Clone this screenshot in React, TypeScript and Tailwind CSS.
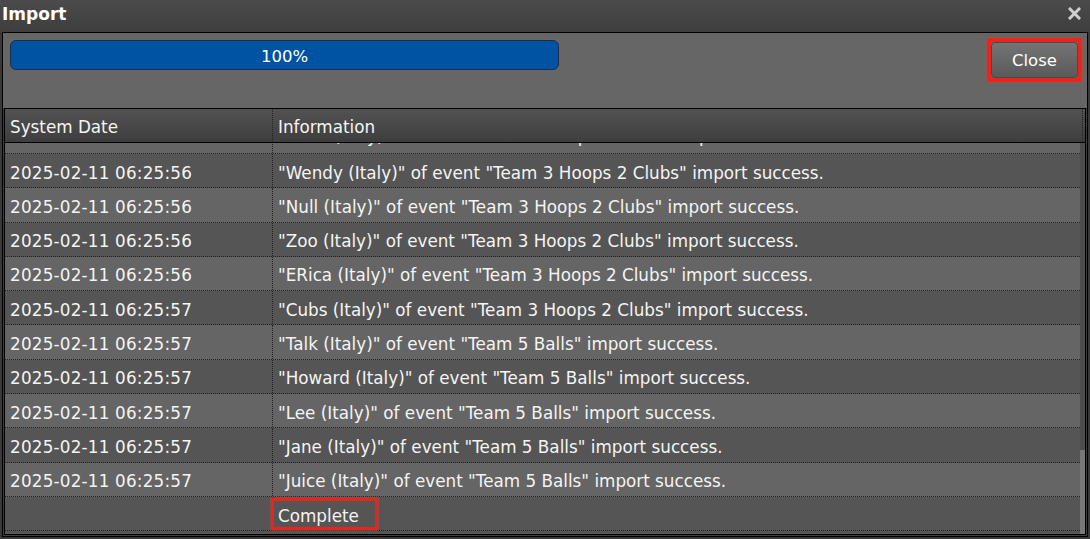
import React from 'react';

type Row = { date: string; info: string };

const ROWS: Row[] = [
  { date: '2025-02-11 06:25:56', info: '"Anna (Italy)" of event "Team 3 Hoops 2 Clubs" import success.' },
  { date: '2025-02-11 06:25:56', info: '"Wendy (Italy)" of event "Team 3 Hoops 2 Clubs" import success.' },
  { date: '2025-02-11 06:25:56', info: '"Null (Italy)" of event "Team 3 Hoops 2 Clubs" import success.' },
  { date: '2025-02-11 06:25:56', info: '"Zoo (Italy)" of event "Team 3 Hoops 2 Clubs" import success.' },
  { date: '2025-02-11 06:25:56', info: '"ERica (Italy)" of event "Team 3 Hoops 2 Clubs" import success.' },
  { date: '2025-02-11 06:25:57', info: '"Cubs (Italy)" of event "Team 3 Hoops 2 Clubs" import success.' },
  { date: '2025-02-11 06:25:57', info: '"Talk (Italy)" of event "Team 5 Balls" import success.' },
  { date: '2025-02-11 06:25:57', info: '"Howard (Italy)" of event "Team 5 Balls" import success.' },
  { date: '2025-02-11 06:25:57', info: '"Lee (Italy)" of event "Team 5 Balls" import success.' },
  { date: '2025-02-11 06:25:57', info: '"Jane (Italy)" of event "Team 5 Balls" import success.' },
  { date: '2025-02-11 06:25:57', info: '"Juice (Italy)" of event "Team 5 Balls" import success.' },
];

export default function App() {
  return (
    <div className="w-[1090px] h-[539px] overflow-hidden bg-[#393939] text-[#f4f4f4] font-['DejaVu_Sans',Verdana,sans-serif] flex flex-col">
      {/* Title bar */}
      <div className="h-[32px] flex-none flex items-center justify-between pl-[2px] pr-[9px] bg-gradient-to-b from-[#4b4b4b] to-[#3e3e3e]">
        <span className="text-[17px] font-bold leading-none text-white -mt-[4px]">Import</span>
        <svg width="13" height="13" viewBox="0 0 13 13" className="-mt-[6px]">
          <path d="M2 2 L11 11 M11 2 L2 11" stroke="#cfcfcf" strokeWidth="3" strokeLinecap="square" />
        </svg>
      </div>

      {/* Panel */}
      <div className="ml-[2px] mr-[2px] h-[505px] flex-none border border-black bg-[#3c3c3c] flex flex-col">
        <div className="h-[75px] flex-none bg-[#666] flex items-start justify-between pl-[7px] pr-[5px]">
          <div className="mt-[7px] w-[549px] h-[30px] rounded-[6px] border border-[#1b2c4c] bg-[#0052a3] flex items-center justify-center pt-[4px] text-[16.5px] text-white">
            100%
          </div>
          <div className="mt-[5px] border-[4px] border-[#e8241b] rounded-[2px] shadow-[0_0_2px_#ff3b2f]">
            <button className="w-[87px] h-[36px] rounded-[4px] border border-[#4a4a4a] bg-gradient-to-b from-[#747474] to-[#5a5a5a] text-[16.5px] text-white flex items-center justify-center pt-[2px]">
              Close
            </button>
          </div>
        </div>

        {/* Table */}
        <div className="flex-1 mx-[1px] mb-[1px] border border-black flex flex-col bg-[#555]">
          <div className="h-[34px] flex-none flex border-b border-black bg-gradient-to-b from-[#525252] to-[#3e3e3e] text-[16.8px]">
            <div className="w-[268px] flex-none pl-[5px] pt-[4px] flex items-center border-r border-dotted border-[#222]">System Date</div>
            <div className="flex-1 pl-[5px] pt-[4px] flex items-center border-r border-dotted border-[#222] mr-[2px]">Information</div>
          </div>
          <div className="flex-1 flex min-h-0">
            <div className="flex-1 overflow-hidden">
              <div className="-mt-[23.3px]">
                {ROWS.map((r, i) => (
                  <div
                    key={i}
                    className={`h-[34.3px] flex text-[16.8px] border-b border-dotted border-[#222] ${i % 2 === 0 ? 'bg-[#656565]' : 'bg-[#555]'}`}
                  >
                    <div className={`w-[268px] flex-none pl-[5px] flex items-center border-r border-dotted border-[#222] whitespace-nowrap tracking-[0.2px] ${i === 0 ? 'pt-0' : 'pt-[5px]'}`}>{r.date}</div>
                    <div className={`flex-1 pl-[5px] flex items-center whitespace-nowrap ${i === 0 ? 'pt-0' : 'pt-[5px]'}`}>{r.info}</div>
                  </div>
                ))}
                <div className="h-[34.3px] flex text-[16.8px] border-b border-dotted border-[#222] bg-[#555]">
                  <div className="w-[268px] flex-none border-r border-dotted border-[#222]"></div>
                  <div className="flex-1 pl-[5px] pt-[5px] flex items-center relative">
                    Complete
                    <span className="absolute left-[-2px] top-[1px] w-[107px] h-[32px] border-[3px] border-[#e8241b] shadow-[0_0_2px_#ff3b2f]"></span>
                  </div>
                </div>
              </div>
            </div>
            {/* Scrollbar */}
            <div className="w-[5px] flex-none flex flex-col bg-[#4e4e4e]">
              <div className="flex-1"></div>
              <div className="h-[84px] bg-[#787878]"></div>
            </div>
          </div>
        </div>
      </div>
    </div>
  );
}
